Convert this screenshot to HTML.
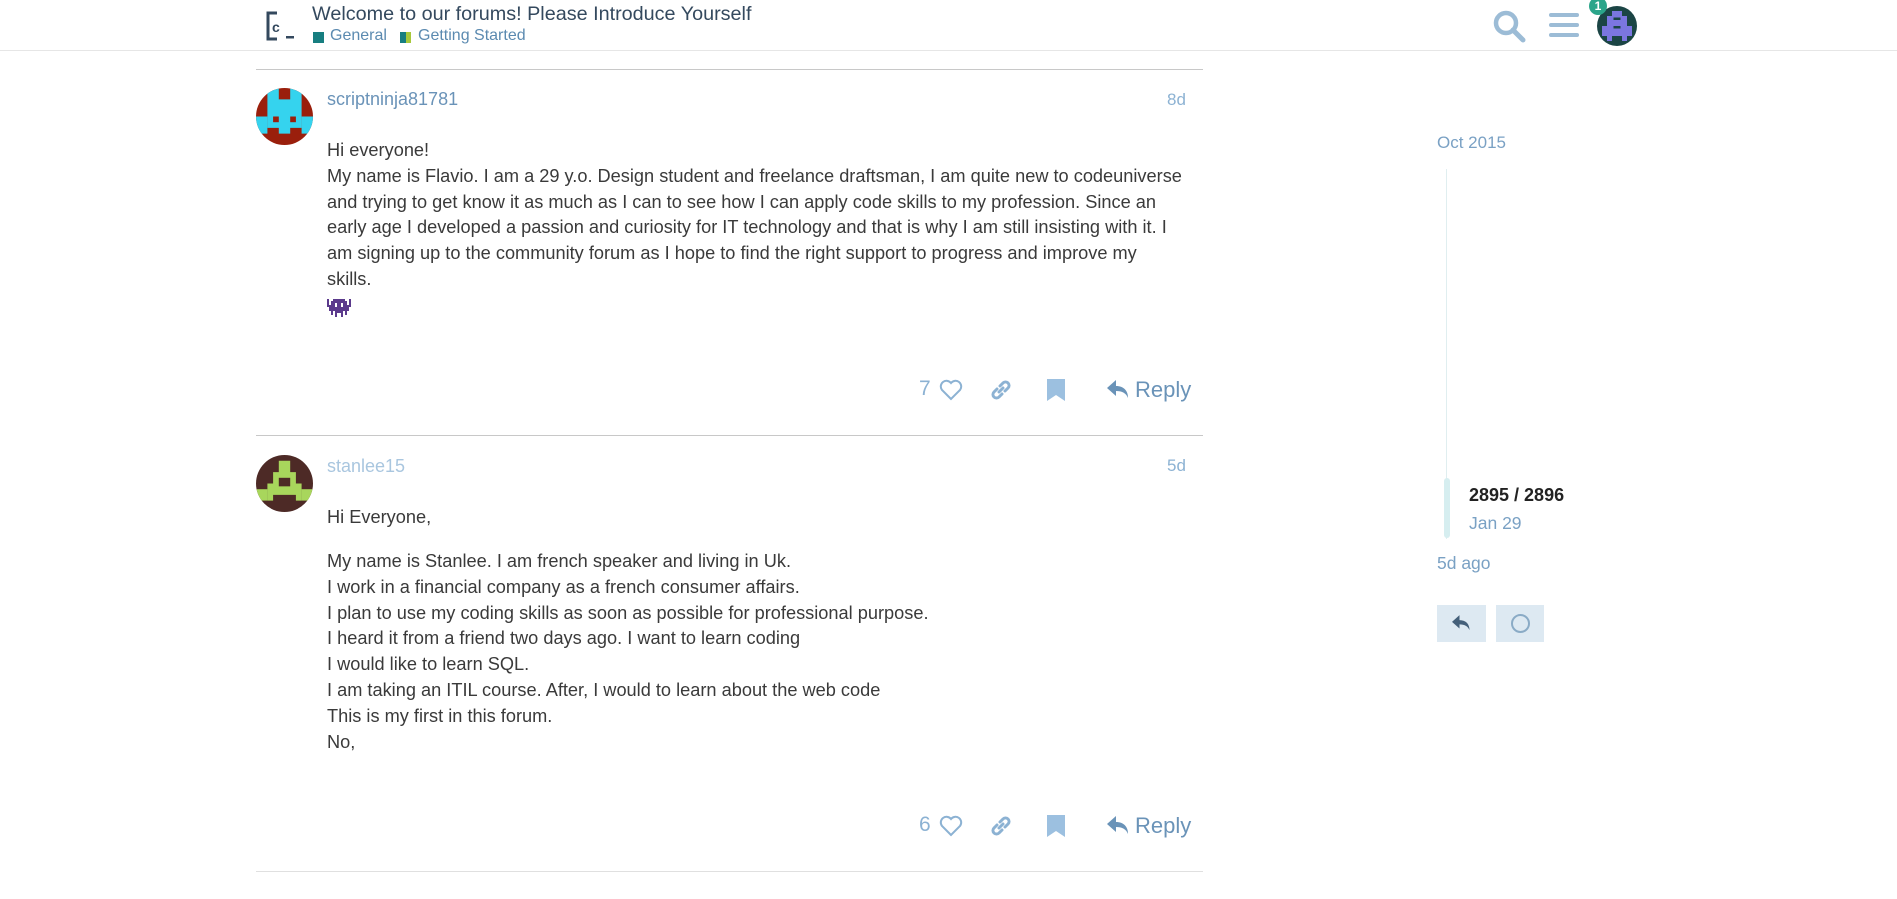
<!DOCTYPE html>
<html><head><meta charset="utf-8"><style>
body{margin:0;width:1897px;height:899px;background:#fff;font-family:"Liberation Sans",sans-serif;position:relative;overflow:hidden;color:#333}
.a{position:absolute;white-space:nowrap}
.body{font-size:18.2px;line-height:25.8px;color:#3a3a3a}
.blue{color:#6a93b8}
.lt{color:#8cb2d3}
</style></head><body>
<!-- header -->
<div class="a" style="left:0;top:50px;width:1897px;height:1px;background:#e6e6e6"></div>
<svg class="a" style="left:265px;top:10px" width="32" height="32" viewBox="0 0 32 32"><path d="M12 3H3v26h9" fill="none" stroke="#34495e" stroke-width="3"/><text x="7" y="22" font-size="14" font-family="Liberation Sans" fill="#34495e" font-weight="bold">c</text><rect x="21" y="26" width="8" height="2.5" fill="#34495e"/></svg>
<div class="a" style="left:312px;top:3px;font-size:19.8px;color:#34495e">Welcome to our forums! Please Introduce Yourself</div>
<div class="a" style="left:313px;top:32px;width:11px;height:11px;background:#177e80"></div>
<div class="a" style="left:330px;top:27px;font-size:16px;color:#5b8ab0">General</div>
<div class="a" style="left:400px;top:32px;width:6px;height:11px;background:#177e80"></div>
<div class="a" style="left:406px;top:32px;width:5px;height:11px;background:#a7c83b"></div>
<div class="a" style="left:418px;top:27px;font-size:16px;color:#5b8ab0">Getting Started</div>
<svg class="a" style="left:1492px;top:9px" width="36" height="34" viewBox="0 0 36 34"><circle cx="14" cy="14" r="10" fill="none" stroke="#9cbcd6" stroke-width="4.5"/><path d="M21 21l10 10" stroke="#9cbcd6" stroke-width="5" stroke-linecap="round"/></svg>
<div class="a" style="left:1549px;top:13px;width:30px;height:4px;background:#9cbcd6;border-radius:2px"></div>
<div class="a" style="left:1549px;top:23px;width:30px;height:4px;background:#9cbcd6;border-radius:2px"></div>
<div class="a" style="left:1549px;top:33px;width:30px;height:4px;background:#9cbcd6;border-radius:2px"></div>
<svg class="a" style="left:1597px;top:6px" width="40" height="40" viewBox="0 0 8 8"><circle cx="4" cy="4" r="4" fill="#1b4545"/><path d="M3 1h2v1h1v2h1v2H6v1H5V6H3v1H2V6H1V4h1V2h1z" fill="#7b76e0"/><rect x="3.3" y="2.3" width="1.4" height=".5" fill="#1b4545"/><rect x="3.3" y="4" width="1.4" height=".5" fill="#1b4545"/></svg>
<div class="a" style="left:1589px;top:-3px;width:18px;height:18px;border-radius:9px;background:#2ba58a;color:#fff;font-size:12px;font-weight:bold;text-align:center;line-height:18px">1</div>

<!-- post 1 -->
<div class="a" style="left:256px;top:69px;width:947px;height:1px;background:#c8c8c8"></div>
<svg class="a" style="left:256px;top:88px" width="57" height="57" viewBox="0 0 10 10"><clipPath id="c1"><circle cx="5" cy="5" r="5"/></clipPath><g clip-path="url(#c1)"><rect width="10" height="10" fill="#9a1f0c"/><path d="M2 0h2v2h2V0h2v7H6v1H4V7H2z" fill="#35d3ee"/><path d="M0 5h2v3H0zM8 5h2v3H8z" fill="#35d3ee"/><rect x="3" y="5" width="1" height="1" fill="#9a1f0c"/><rect x="6" y="5" width="1" height="1" fill="#9a1f0c"/></g></svg>
<div class="a blue" style="left:327px;top:89px;font-size:18px">scriptninja81781</div>
<div class="a lt" style="left:1167px;top:90px;font-size:17px">8d</div>
<div class="a body" style="left:327px;top:138px">Hi everyone!<br>My name is Flavio. I am a 29 y.o. Design student and freelance draftsman, I am quite new to codeuniverse<br>and trying to get know it as much as I can to see how I can apply code skills to my profession. Since an<br>early age I developed a passion and curiosity for IT technology and that is why I am still insisting with it. I<br>am signing up to the community forum as I hope to find the right support to progress and improve my<br>skills.</div>
<svg class="a" style="left:327px;top:297px" width="24" height="22" viewBox="0 0 12 11"><path d="M0 1h1v3h1V2h1V1h6v1h1v2h1V1h1v4h-1v2h-1v2H9V7H8v3H7V8H5v2H4V7H3v2H2V7H1V5H0z" fill="#5b3a8c"/><rect x="4" y="3" width="1" height="2" fill="#fff"/><rect x="7" y="3" width="1" height="2" fill="#fff"/></svg>
<div class="a lt" style="left:919px;top:377px;font-size:21px">7</div>
<svg class="a" style="left:939px;top:379px" width="24" height="22" viewBox="0 0 24 22"><path d="M12 20L3 11a5 5 0 0 1 9-7 5 5 0 0 1 9 7z" fill="none" stroke="#8cb2d3" stroke-width="2"/></svg>
<svg class="a" style="left:989px;top:378px" width="24" height="24" viewBox="0 0 24 24"><path d="M10 14l4-4M8 11l-3 3a3.5 3.5 0 0 0 5 5l3-3M16 13l3-3a3.5 3.5 0 0 0-5-5l-3 3" fill="none" stroke="#8cb2d3" stroke-width="3" stroke-linecap="round"/></svg>
<svg class="a" style="left:1047px;top:379px" width="18" height="22" viewBox="0 0 18 22"><path d="M0 0h18v22l-9-6-9 6z" fill="#9cc0e0"/></svg>
<svg class="a" style="left:1107px;top:380px" width="24" height="20" viewBox="0 0 24 20"><path d="M9 0L0 8l9 8v-5c6 0 10 2 12 7 0-7-4-12-12-12z" fill="#6a93b8"/></svg>
<div class="a" style="left:1135px;top:377px;font-size:22px;color:#6a93b8">Reply</div>
<div class="a" style="left:256px;top:435px;width:947px;height:1px;background:#c8c8c8"></div>

<!-- post 2 -->
<svg class="a" style="left:256px;top:455px" width="57" height="57" viewBox="0 0 10 10"><clipPath id="c2"><circle cx="5" cy="5" r="5"/></clipPath><g clip-path="url(#c2)"><rect width="10" height="10" fill="#4d2a26"/><path d="M4 1h2v2h1v2h1v3H7V7H3v1H2V5h1V3h1z" fill="#a8d65c"/><rect x="4" y="4" width="2" height="1.5" fill="#4d2a26"/><rect x="0" y="6" width="2" height="2" fill="#a8d65c"/><rect x="8" y="6" width="2" height="2" fill="#a8d65c"/></g></svg>
<div class="a" style="left:327px;top:456px;font-size:18px;color:#a9c6df">stanlee15</div>
<div class="a lt" style="left:1167px;top:456px;font-size:17px">5d</div>
<div class="a body" style="left:327px;top:505px">Hi Everyone,</div>
<div class="a body" style="left:327px;top:549px">My name is Stanlee. I am french speaker and living in Uk.<br>I work in a financial company as a french consumer affairs.<br>I plan to use my coding skills as soon as possible for professional purpose.<br>I heard it from a friend two days ago. I want to learn coding<br>I would like to learn SQL.<br>I am taking an ITIL course. After, I would to learn about the web code<br>This is my first in this forum.<br>No,</div>
<div class="a lt" style="left:919px;top:813px;font-size:21px">6</div>
<svg class="a" style="left:939px;top:815px" width="24" height="22" viewBox="0 0 24 22"><path d="M12 20L3 11a5 5 0 0 1 9-7 5 5 0 0 1 9 7z" fill="none" stroke="#8cb2d3" stroke-width="2"/></svg>
<svg class="a" style="left:989px;top:814px" width="24" height="24" viewBox="0 0 24 24"><path d="M10 14l4-4M8 11l-3 3a3.5 3.5 0 0 0 5 5l3-3M16 13l3-3a3.5 3.5 0 0 0-5-5l-3 3" fill="none" stroke="#8cb2d3" stroke-width="3" stroke-linecap="round"/></svg>
<svg class="a" style="left:1047px;top:815px" width="18" height="22" viewBox="0 0 18 22"><path d="M0 0h18v22l-9-6-9 6z" fill="#9cc0e0"/></svg>
<svg class="a" style="left:1107px;top:816px" width="24" height="20" viewBox="0 0 24 20"><path d="M9 0L0 8l9 8v-5c6 0 10 2 12 7 0-7-4-12-12-12z" fill="#6a93b8"/></svg>
<div class="a" style="left:1135px;top:813px;font-size:22px;color:#6a93b8">Reply</div>
<div class="a" style="left:256px;top:871px;width:947px;height:1px;background:#e0e0e0"></div>

<!-- timeline -->
<div class="a" style="left:1437px;top:133px;font-size:17px;color:#7aa1c4">Oct 2015</div>
<div class="a" style="left:1446px;top:169px;width:1px;height:370px;background:#e0eef0"></div>
<div class="a" style="left:1444px;top:478px;width:6px;height:60px;background:#d6eef0;border-radius:3px"></div>
<div class="a" style="left:1469px;top:485px;font-size:18px;font-weight:bold;color:#222">2895 / 2896</div>
<div class="a" style="left:1469px;top:513px;font-size:17.5px;color:#7aa1c4">Jan 29</div>
<div class="a" style="left:1437px;top:553px;font-size:17.5px;color:#7aa1c4">5d ago</div>
<div class="a" style="left:1437px;top:605px;width:49px;height:37px;background:#dde9f2"></div>
<svg class="a" style="left:1452px;top:615px" width="20" height="17" viewBox="0 0 24 20"><path d="M9 0L0 8l9 8v-5c6 0 10 2 12 7 0-7-4-12-12-12z" fill="#44607a"/></svg>
<div class="a" style="left:1496px;top:605px;width:48px;height:37px;background:#dde9f2"></div>
<div class="a" style="left:1511px;top:614px;width:15px;height:15px;border:2px solid #8aabc6;border-radius:50%"></div>
</body></html>
